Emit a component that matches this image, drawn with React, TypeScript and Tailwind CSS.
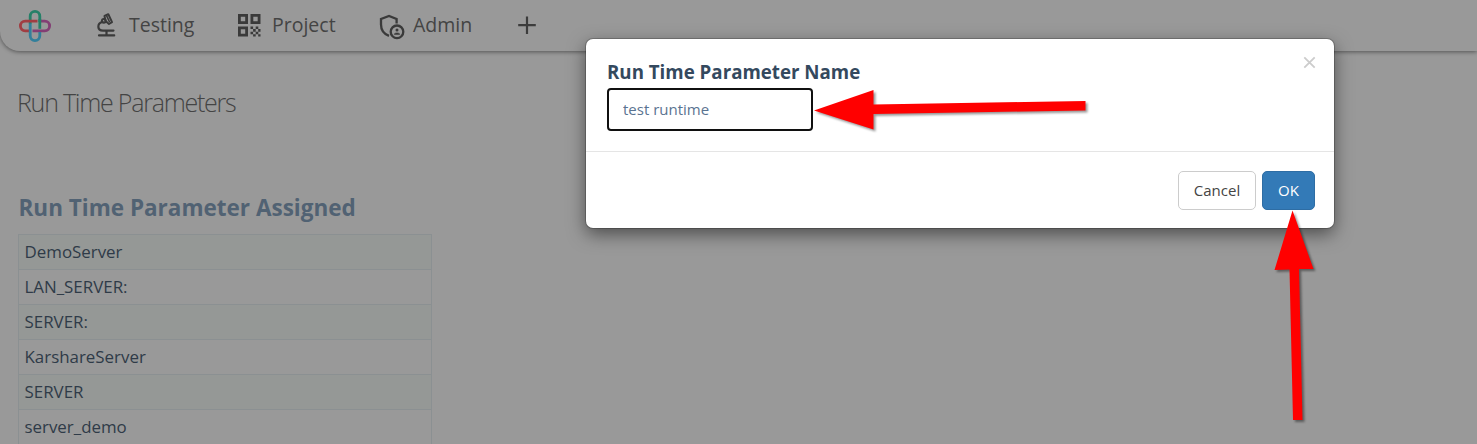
import React from "react";

const rows = ["DemoServer", "LAN_SERVER:", "SERVER:", "KarshareServer", "SERVER", "server_demo"];

function Logo() {
  return (
    <svg width="32" height="32" viewBox="0 0 32 32" fill="none" strokeWidth="2.8">
      <path d="M11.200 14V6.200a4.800 4.800 0 0 1 9.600 0V12" stroke="#258068" />
      <path d="M11 20.800H6.200a4.800 4.800 0 0 1 0-9.600H18.500" stroke="#a13d42" />
      <path d="M22 11.200h3.800a4.800 4.800 0 0 1 0 9.600H13.500" stroke="#833e74" />
      <path d="M11.200 13.500v12.300a4.800 4.800 0 0 0 9.600 0V22" stroke="#327f9b" />
      <path d="M20.800 9v9.800" stroke="#258068" />
    </svg>
  );
}

function Microscope() {
  return (
    <svg width="28" height="28" viewBox="0 0 28 28" fill="none" stroke="currentColor" strokeWidth="2.2" strokeLinecap="round" strokeLinejoin="round">
      <path d="M6 24.400h15.200M13.500 20v4" />
      <path d="M9.500 10.800C3.800 12.500 4 19.600 10 19.600H20.500" />
      <circle cx="10.800" cy="9.800" r="1.900" strokeWidth="2" />
      <path d="M11.500 5L15.300 3.200L19 11.200L16 13L12.500 10z" strokeWidth="2" />
      <path d="M13.500 4.500L16.300 10.500" strokeWidth="1.600" />
    </svg>
  );
}

function QrCode() {
  return (
    <svg width="28" height="28" viewBox="0 0 28 28" fill="none" stroke="currentColor" strokeWidth="2.800">
      <path d="M3.400 4.400h7.200v7.200H3.400zM15.900 4.400h7.200v7.200h-7.200zM3.400 16.900h7.200v7.200H3.400z" />
      <path stroke="none" fill="currentColor" d="M14.500 15.500h2.600v2.600h-2.600zM19.700 15.500h2.600v2.600h-2.600zM17.100 18.100h2.600v2.600h-2.600zM22.200 18.100h2.300v2.600h-2.300zM14.500 20.700h2.600v2.600h-2.600zM19.700 20.700h2.600v2.600h-2.600zM17.100 23.200h2.600v2.300h-2.600zM22.200 23.200h2.300v2.300h-2.300z" />
    </svg>
  );
}

function AdminShield() {
  return (
    <svg width="28" height="28" viewBox="0 0 28 28" className="overflow-visible" fill="none" stroke="currentColor" strokeWidth="2.300">
      <path d="M19.600 12.500V8L12 5L4 8v5.500c0 5 3 9.500 8 11.400" />
      <circle cx="20" cy="20.800" r="6.300" />
      <circle cx="20" cy="18.900" r="1.500" fill="currentColor" stroke="none" />
      <path d="M17.200 23.400c0-2 5.600-2 5.600 0z" fill="currentColor" strokeWidth="0.500" />
    </svg>
  );
}

export default function App() {
  return (
    <div className="relative h-[444px] w-full overflow-hidden bg-[#999999] font-['Open_Sans',sans-serif]">
      <header className="flex h-[51px] items-center rounded-bl-[20px] bg-[#999999] pl-5 text-[19.5px] text-[#444444] shadow-[0_1px_4px_rgba(0,0,0,0.45)]">
        <div className="-ml-px w-[74px]"><Logo /></div>
        <div className="flex w-[143px] items-center gap-2 pb-[2px]"><span className="text-[#3a3a3a]"><Microscope /></span><span>Testing</span></div>
        <div className="flex w-[141px] items-center gap-2 pb-[2px]"><span className="text-[#3a3a3a]"><QrCode /></span><span>Project</span></div>
        <div className="flex w-[136px] items-center gap-2 pb-[2px]"><span className="text-[#3a3a3a]"><AdminShield /></span><span>Admin</span></div>
        <svg width="28" height="28" viewBox="0 0 28 28" stroke="#3c3c3c" strokeWidth="2.2"><path d="M14 4.500v17.500M5.200 13.200h17.600" /></svg>
      </header>
      <main className="pl-[18px]">
        <h1 className="-ml-px mt-[33px] h-9 text-[25px] font-light leading-9 tracking-[-1.240px] text-[#444444]">Run Time Parameters</h1>
        <h2 className="mt-[73px] h-[29px] pl-[0.500px] text-[22.500px] font-bold leading-[29px] text-[#516273]">Run Time Parameter Assigned</h2>
        <div className="mt-3 w-[414px] border border-[#8b9092]">
          {rows.map((r) => (
            <div key={r} className="h-[35px] border-b border-[#8b9092] pl-[5.500px] text-[16.900px] leading-[34px] text-[#2f3b48] odd:bg-[#959896]">{r}</div>
          ))}
        </div>
      </main>

      <div className="absolute left-[586px] top-[39px] flex h-[189px] w-[748px] flex-col rounded-[7px] bg-white shadow-[0_0_0_1px_rgba(0,0,0,0.2),0_6px_18px_rgba(0,0,0,0.5)]">
        <div className="flex h-[113px] justify-between border-b border-[#e5e5e5] pl-[21px] pr-[18px]">
          <div className="pt-[21px]">
            <label className="block h-7 text-[18.720px] font-bold leading-6 text-[#34495e]">Run Time Parameter Name</label>
            <input defaultValue="test runtime" className="block h-[43px] w-[206px] rounded-[4px] border-2 border-[#101010] px-3.5 pb-[2px] text-[15px] text-[#5a7391] outline-none" />
          </div>
          <button aria-label="Close" className="mt-[17px] h-[13px] self-start text-[#cccccc]">
            <svg width="13" height="13" viewBox="0 0 13 13" stroke="currentColor" strokeWidth="1.800"><path d="M1.300 1.300l10.400 10.400M11.700 1.300L1.300 11.700" /></svg>
          </button>
        </div>
        <div className="flex justify-end gap-1.5 pr-[19px] pt-[19px] text-[15px]">
          <button className="h-[39px] w-[78px] rounded-[5px] border border-[#cccccc] text-[#444444]">Cancel</button>
          <button className="h-[39px] w-[53px] rounded-[5px] border border-[#2e6da4] bg-[#337ab7] text-white">OK</button>
        </div>
      </div>

      <svg className="pointer-events-none absolute inset-0 drop-shadow-[2px_2px_1px_rgba(0,0,0,0.4)]" width="1477" height="444" fill="#ff0000">
        <path d="M814 110.500L873.500 90v14.500L1085.500 101v9.500L873.500 114v15.500z" />
        <path d="M1292.500 210.500L1313.500 269H1299L1302.500 420H1293L1289.500 269.500L1274.500 270z" />
      </svg>
    </div>
  );
}
